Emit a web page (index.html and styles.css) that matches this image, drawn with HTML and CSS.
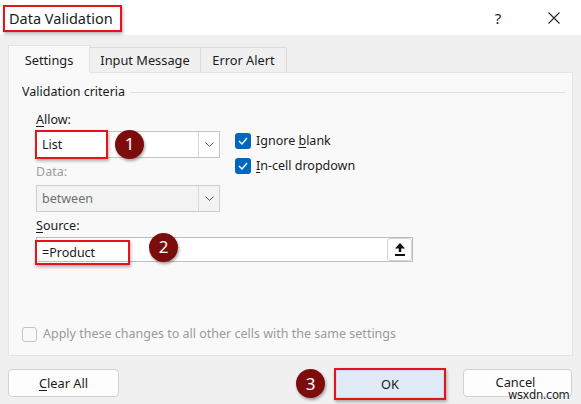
FILE: index.html
```html
<!DOCTYPE html>
<html>
<head>
<meta charset="UTF-8" />
<title>Data Validation</title>
<link rel="stylesheet" href="styles.css">
</head>
<body>
    <div class="titlebar">
        <span class="title mark">Data Validation</span>
        <span class="help">?</span>
        <span class="close">
            <svg width="12" height="12" viewBox="0 0 12 12"><path d="M0.5 0.5 L11.5 11.5 M11.5 0.5 L0.5 11.5" stroke="#222" stroke-width="1.1" fill="none"/></svg>
        </span>
    </div>

    <div class="dialog">
        <div class="tabs">
            <div class="tab active">Settings</div>
            <div class="tab msg">Input Message</div>
            <div class="tab err">Error Alert</div>
        </div>

        <div class="panel">
            <div class="legend"><span>Validation criteria</span></div>

            <div class="criteria">
                <div class="label allow-label"><u>A</u>llow:</div>
                <div class="allow-row">
                    <div class="combo">
                        <span class="value mark">List</span>
                        <span class="step">1</span>
                        <span class="arrow">
                            <svg width="9" height="5" viewBox="0 0 9 5"><path d="M0.5 0.5 L4.5 4.5 L8.5 0.5" stroke="#555" fill="none"/></svg>
                        </span>
                    </div>
                    <div class="checks">
                        <div class="check">
                            <span class="box on"><svg width="10" height="8" viewBox="0 0 10 8"><path d="M1 4 L4 7 L9 1" stroke="#fff" stroke-width="1.4" fill="none"/></svg></span>
                            <span>Ignore <u>b</u>lank</span>
                        </div>
                        <div class="check">
                            <span class="box on"><svg width="10" height="8" viewBox="0 0 10 8"><path d="M1 4 L4 7 L9 1" stroke="#fff" stroke-width="1.4" fill="none"/></svg></span>
                            <span><u>I</u>n-cell dropdown</span>
                        </div>
                    </div>
                </div>

                <div class="label muted data-label">Data:</div>
                <div class="combo disabled">
                    <span class="value">between</span>
                    <span class="arrow">
                        <svg width="9" height="5" viewBox="0 0 9 5"><path d="M0.5 0.5 L4.5 4.5 L8.5 0.5" stroke="#555" fill="none"/></svg>
                    </span>
                </div>

                <div class="label source-label"><u>S</u>ource:</div>
                <div class="source">
                    <span class="value mark">=Product</span>
                    <span class="step">2</span>
                    <span class="pick">
                        <svg width="10" height="13" viewBox="0 0 10 13"><path d="M5 0 L10 5.5 L6.2 5.5 L6.2 9 L3.8 9 L3.8 5.5 L0 5.5 Z M0 11 L10 11 L10 13 L0 13 Z" fill="#111"/></svg>
                    </span>
                </div>
            </div>

            <div class="apply">
                <span class="box"></span>
                <span>Apply these changes to all other cells with the same settings</span>
            </div>
        </div>

        <div class="buttons">
            <button class="btn clear"><u>C</u>lear All</button>
            <span class="step">3</span>
            <span class="mark ok-mark"><button class="btn ok">OK</button></span>
            <button class="btn cancel"><span class="caption">Cancel</span><span class="stamp">wsxdn.com</span></button>
        </div>
    </div>
</body>
</html>
```

FILE: styles.css
```css
html, body{
    margin:0px;
    padding:0px;
}
body{
    width:581px;
    height:404px;
    overflow:hidden;
    background:#f0f0f0;
    color:#1b1b1b;
    font:12.5px/16px "Noto Sans", "Segoe UI", sans-serif;
}
u{
    text-decoration-thickness:1px;
    text-underline-offset:2px;
}

/* red callout boxes and numbered steps */
.mark{
    border:2px solid #e3141c;
    box-shadow:1px 2px 3px rgba(0,0,0,0.3);
}
.step{
    width:29px;
    height:29px;
    flex:none;
    border-radius:50%;
    background:#7d0d0d;
    color:#fff;
    font-size:17px;
    display:flex;
    align-items:center;
    justify-content:center;
    box-shadow:1px 2px 3px rgba(0,0,0,0.35);
}

/* window title */
.titlebar{
    height:35px;
    background:#fff;
    display:flex;
    align-items:center;
    padding:0px 15px 0px 3px;
    box-sizing:border-box;
}
.title{
    font-size:14.5px;
    line-height:19px;
    padding:2px 7px 2px 4px;
    margin-top:2px;
}
.help{
    margin-left:auto;
    width:24px;
    text-align:center;
    font-size:15px;
    color:#222;
}
.close{
    width:24px;
    margin-left:32px;
    display:flex;
    justify-content:center;
}

.dialog{
    padding:10px 8px 0px 8px;
}

/* tabs */
.tabs{
    display:flex;
    align-items:flex-end;
    height:27px;
}
.tab{
    box-sizing:border-box;
    height:25px;
    border:1px solid #dcdcdc;
    border-bottom:none;
    background:#f0f0f0;
    display:flex;
    align-items:center;
    justify-content:center;
    font-size:12.8px;
}
.tab.active{
    width:82px;
    height:28px;
    margin-bottom:-1px;
    background:#f9f9f9;
    border-color:#e3e3e3;
    position:relative;
    z-index:1;
}
.tab.msg{
    width:112px;
    margin-left:-1px;
}
.tab.err{
    width:87px;
    margin-left:-1px;
}

/* settings page */
.panel{
    box-sizing:border-box;
    height:284px;
    background:#f9f9f9;
    border:1px solid #e3e3e3;
    padding:10px 7px 0px 13px;
    display:flex;
    flex-direction:column;
}
.legend{
    height:18px;
    display:flex;
    align-items:center;
}
.legend:after{
    content:"";
    flex:1;
    height:1px;
    margin-left:5px;
    background:#dedede;
}
.criteria{
    padding-left:14px;
}
.label{
    height:16px;
}
.allow-label{
    margin-top:11px;
    margin-bottom:3px;
}
.data-label{
    margin-top:6px;
    margin-bottom:5px;
}
.source-label{
    margin-top:6px;
    margin-bottom:3px;
}
.muted{
    color:#9d9d9d;
}

.allow-row{
    display:flex;
    align-items:flex-start;
    height:27px;
}
.combo{
    box-sizing:border-box;
    width:184px;
    height:27px;
    border:1px solid #c4c4c4;
    background:#fff;
    display:flex;
    align-items:center;
}
.combo .value{
    padding-left:5px;
}
.combo .value.mark{
    box-sizing:border-box;
    width:73px;
    height:29px;
    margin:0px 0px 0px -2px;
    display:flex;
    align-items:center;
    padding-left:5px;
}
.combo .step{
    margin-left:7px;
    margin-top:-1px;
}
.arrow{
    margin-left:auto;
    align-self:stretch;
    width:20px;
    border-left:1px solid #d8d8d8;
    display:flex;
    align-items:center;
    justify-content:center;
}
.combo.disabled{
    background:#f3f3f3;
    border-color:#cdcdcd;
    color:#6f6f6f;
}

.checks{
    margin-left:15px;
    padding-top:2px;
    display:flex;
    flex-direction:column;
    gap:9px;
}
.check{
    display:flex;
    align-items:center;
    height:16px;
}
.box{
    box-sizing:border-box;
    width:16px;
    height:16px;
    border-radius:3px;
    margin-right:5px;
    display:flex;
    align-items:center;
    justify-content:center;
}
.box.on{
    background:#0067c0;
}

.source{
    box-sizing:border-box;
    width:377px;
    height:25px;
    border:1px solid #bdbdbd;
    background:#fff;
    display:flex;
    align-items:center;
}
.source .value.mark{
    box-sizing:border-box;
    width:95px;
    height:25px;
    margin:3px 0px -3px -2px;
    display:flex;
    align-items:center;
    padding-left:5px;
}
.source .step{
    margin-left:19px;
    margin-top:-5px;
}
.pick{
    margin-left:auto;
    align-self:stretch;
    width:25px;
    box-sizing:border-box;
    border:1px solid #d4d4d4;
    border-radius:3px;
    background:#fdfdfd;
    display:flex;
    align-items:center;
    justify-content:center;
}

.apply{
    margin-top:auto;
    margin-bottom:13px;
    display:flex;
    align-items:center;
    color:#9a9a9a;
}
.apply .box{
    width:15px;
    height:15px;
    border:1px solid #c4c4c4;
    background:#f9f9f9;
    margin-right:6px;
}

/* bottom buttons */
.buttons{
    display:flex;
    align-items:flex-start;
    margin-top:13px;
}
.btn{
    box-sizing:border-box;
    height:28px;
    border:1px solid #d1d1d1;
    border-radius:4px;
    background:#fdfdfd;
    color:#1b1b1b;
    font:12.8px/16px "Noto Sans", "Segoe UI", sans-serif;
    padding:0px;
}
.clear{
    width:111px;
}
.buttons .step{
    margin-left:177px;
    margin-top:0px;
}
.ok-mark{
    display:flex;
    margin-left:9px;
    margin-top:-1px;
}
.ok{
    width:108px;
    background:#dfeaf6;
    border-color:#c9dcef;
    border-radius:0px;
}
.cancel{
    width:109px;
    margin-left:17px;
    position:relative;
}
.caption{
    position:relative;
    top:-1px;
    left:-2px;
    line-height:13px;
    display:inline-block;
}
.stamp{
    position:absolute;
    left:44px;
    top:20px;
    font:11.5px/11px "DejaVu Sans", sans-serif;
    letter-spacing:-0.4px;
    color:#222;
    text-shadow:0 0 2px #fff, 0 0 2px #fff;
}
```
